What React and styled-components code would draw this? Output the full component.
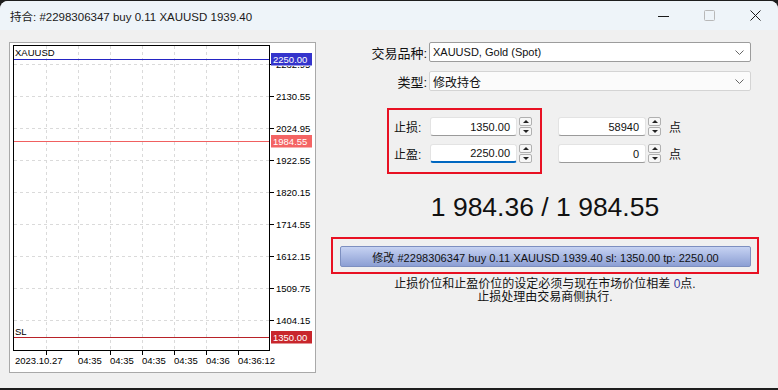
import React from 'react';
import styled, { createGlobalStyle } from 'styled-components';

const FONT = `"Liberation Sans", "Noto Sans CJK SC", sans-serif`;

const GlobalStyle = createGlobalStyle`
  html, body {
    margin: 0;
    background: #1e1e1e;
  }
  #root {
    width: 778px;
    height: 390px;
  }
`;

const Window = styled.div`
  width: 778px;
  height: 387px;
  margin-top: 1px;
  background: #f0f0f0;
  border-radius: 8px 8px 0 0;
  overflow: hidden;
  display: flex;
  flex-direction: column;
  font-family: ${FONT};
  color: #111;
`;

const TitleBar = styled.div`
  height: 29px;
  flex: none;
  display: flex;
  align-items: center;
  background: #eef4f9;
  padding-left: 10px;
`;

const Title = styled.span`
  flex: 1;
  font-size: 11.5px;
  color: #1a1a1a;
`;

const WinButton = styled.div`
  width: 46px;
  height: 29px;
  display: flex;
  align-items: center;
  justify-content: center;
`;

const Body = styled.div`
  flex: 1;
  display: flex;
  align-items: flex-start;
  padding: 12px 0 0 9px;
`;

const ChartPanel = styled.div`
  width: 307px;
  height: 331px;
  box-sizing: border-box;
  border: 1px solid #a9a9a9;
  background: #fff;
  flex: none;
  svg {
    display: block;
  }
`;

const RightColumn = styled.div`
  margin-left: 14px;
  width: 430px;
  display: flex;
  flex-direction: column;
`;

const FieldRow = styled.div`
  display: grid;
  grid-template-columns: 97px 322px;
  column-gap: 2px;
  align-items: center;
  margin-top: ${(p) => p.$gap || 0}px;
`;

const FieldLabel = styled.span`
  text-align: right;
  font-size: 13px;
`;

const Select = styled.div`
  height: 20px;
  box-sizing: border-box;
  border: 1px solid ${(p) => (p.$strong ? '#9c9c9c' : '#d4d4d4')};
  background: ${(p) => (p.$strong ? '#fff' : '#fbfbfb')};
  border-radius: 2px;
  display: flex;
  align-items: center;
  justify-content: space-between;
  padding: 0 6px 0 3px;
  font-size: ${(p) => (p.$cjk ? 12 : 11)}px;
`;

const StopsRow = styled.div`
  display: flex;
  align-items: flex-start;
  margin-top: 17px;
  padding-left: 57px;
`;

const HighlightBox = styled.div`
  box-sizing: border-box;
  border: 2px solid #e81123;
  display: flex;
  flex-direction: column;
  gap: 8px;
  width: 155px;
  padding: 7px 8px 9px 5px;
`;

const PointsColumn = styled.div`
  display: flex;
  flex-direction: column;
  gap: 8px;
  margin-left: 16px;
  padding-top: 9px;
`;

const StopLine = styled.div`
  display: flex;
  align-items: center;
  height: 19px;
`;

const StopLabel = styled.span`
  width: 36px;
  font-size: 12px;
`;

const NumberInput = styled.div`
  width: ${(p) => p.$width}px;
  height: 19px;
  box-sizing: border-box;
  background: #fff;
  border: 1px solid #e3e3e3;
  border-bottom: ${(p) => (p.$focused ? '2px solid #0067c0' : '1px solid #9a9a9a')};
  border-radius: 3px;
  display: flex;
  align-items: center;
  justify-content: flex-end;
  padding-right: 6px;
  font-size: 11px;
`;

const Spinner = styled.div`
  margin-left: 2px;
  width: 13px;
  height: 19px;
  display: flex;
  flex-direction: column;
  gap: 1px;
`;

const SpinHalf = styled.div`
  flex: 1;
  box-sizing: border-box;
  border: 1px solid #b0b0b0;
  border-radius: 2px;
  background: #f7f7f7;
  display: flex;
  align-items: center;
  justify-content: center;
  &::after {
    content: '';
    width: 0;
    height: 0;
    border-left: 3px solid transparent;
    border-right: 3px solid transparent;
    ${(p) => (p.$up ? 'border-bottom: 3px solid #222;' : 'border-top: 3px solid #222;')}
  }
`;

const Unit = styled.span`
  margin-left: 8px;
  font-size: 12px;
`;

const Price = styled.div`
  margin-top: 17px;
  text-align: center;
  font-size: 26.5px;
  line-height: 32px;
  color: #111;
`;

const ButtonBox = styled.div`
  margin-top: 14px;
  margin-left: 1px;
  width: 428px;
  height: 37px;
  box-sizing: border-box;
  border: 2px solid #e81123;
  padding: 7px 6px 5px 7px;
`;

const ModifyButton = styled.div`
  height: 21px;
  box-sizing: border-box;
  border: 1px solid #7d8fc0;
  border-radius: 2px;
  background: linear-gradient(#c6d2f2, #8c9fd4);
  display: flex;
  align-items: center;
  justify-content: center;
  font-size: 11px;
  letter-spacing: 0.05px;
  color: #111;
`;

const Notes = styled.div`
  margin-top: 4px;
  text-align: center;
  font-size: 12px;
  line-height: 13px;
`;

const Zero = styled.span`
  color: #3a3aa0;
`;

const gridX = [36, 68, 100, 132, 164, 196, 228];
const prices = ['2232.95', '2130.55', '2024.95', '1922.55', '1820.15', '1714.55', '1612.15', '1509.75', '1404.15'];
const times = [
  ['2023.10.27', 5],
  ['04:35', 68],
  ['04:35', 100],
  ['04:35', 132],
  ['04:35', 164],
  ['04:36', 196],
  ['04:36:12', 228],
];
const levels = [
  { y: 16.5, line: '#2424c4', box: '#3434cc', label: '2250.00' },
  { y: 98.5, line: '#f06060', box: '#f46464', label: '1984.55' },
  { y: 294.5, line: '#b82228', box: '#c8262c', label: '1350.00' },
];

function Chart() {
  const font = { fontFamily: '"Liberation Sans", sans-serif', fontSize: 9.5 };
  return (
    <svg width="305" height="329" viewBox="0 0 305 329">
      <defs>
        <clipPath id="belowTp">
          <rect x="260" y="23" width="45" height="10" />
        </clipPath>
      </defs>
      {gridX.map((x) => (
        <line key={x} x1={x + 0.5} y1="3" x2={x + 0.5} y2="307" stroke="#dadada" strokeDasharray="3 3" />
      ))}
      {prices.map((p, i) => (
        <line key={p} x1="4" y1={21.5 + 32 * i} x2="259" y2={21.5 + 32 * i} stroke="#dadada" strokeDasharray="3 3" />
      ))}
      {levels.map((l) => (
        <line key={l.label} x1="4" y1={l.y} x2="259" y2={l.y} stroke={l.line} />
      ))}
      <rect x="3.5" y="2.5" width="256" height="305" fill="none" stroke="#000" />
      {prices.map((p, i) => (
        <g key={p}>
          <line x1="259.5" y1={21.5 + 32 * i} x2="264" y2={21.5 + 32 * i} stroke="#000" />
          <text
            x="266"
            y={25 + 32 * i}
            {...font}
            fill="#000"
            clipPath={i === 0 ? 'url(#belowTp)' : undefined}
          >
            {p}
          </text>
        </g>
      ))}
      {levels.map((l) => (
        <g key={l.label}>
          <rect x="261" y={l.y - 6.5} width="41" height="12.5" fill={l.box} />
          <text x="263" y={l.y + 3.5} {...font} fill="#fff">{l.label}</text>
        </g>
      ))}
      {gridX.map((x) => (
        <line key={x} x1={x + 0.5} y1="308" x2={x + 0.5} y2="312" stroke="#000" />
      ))}
      {times.map(([t, x], i) => (
        <text key={i} x={x} y="321" {...font} fill="#000">{t}</text>
      ))}
      <text x="5" y="13" {...font} fill="#000">XAUUSD</text>
      <text x="5" y="292" {...font} fill="#000">SL</text>
    </svg>
  );
}

function Chevron() {
  return (
    <svg width="9" height="5" viewBox="0 0 9 5">
      <path d="M0.5 0.5 L4.5 4.5 L8.5 0.5" fill="none" stroke="#666" />
    </svg>
  );
}

function Spin() {
  return (
    <Spinner>
      <SpinHalf $up />
      <SpinHalf />
    </Spinner>
  );
}

export default function App() {
  return (
    <>
      <GlobalStyle />
      <Window>
        <TitleBar>
          <Title>持合: #2298306347 buy 0.11 XAUUSD 1939.40</Title>
          <WinButton>
            <svg width="11" height="11" viewBox="0 0 11 11">
              <line x1="0" y1="6.5" x2="11" y2="6.5" stroke="#1a1a1a" />
            </svg>
          </WinButton>
          <WinButton>
            <svg width="11" height="11" viewBox="0 0 11 11">
              <rect x="0.5" y="0.5" width="10" height="10" rx="1" fill="none" stroke="#b8b8b8" />
            </svg>
          </WinButton>
          <WinButton>
            <svg width="11" height="11" viewBox="0 0 11 11">
              <path d="M0.5 0.5 L10.5 10.5 M10.5 0.5 L0.5 10.5" stroke="#1a1a1a" />
            </svg>
          </WinButton>
        </TitleBar>
        <Body>
          <ChartPanel>
            <Chart />
          </ChartPanel>
          <RightColumn>
            <FieldRow>
              <FieldLabel>交易品种:</FieldLabel>
              <Select $strong>
                <span>XAUUSD, Gold (Spot)</span>
                <Chevron />
              </Select>
            </FieldRow>
            <FieldRow $gap={9}>
              <FieldLabel>类型:</FieldLabel>
              <Select $cjk>
                <span>修改持仓</span>
                <Chevron />
              </Select>
            </FieldRow>
            <StopsRow>
              <HighlightBox>
                <StopLine>
                  <StopLabel>止损:</StopLabel>
                  <NumberInput $width={87}>1350.00</NumberInput>
                  <Spin />
                </StopLine>
                <StopLine>
                  <StopLabel>止盈:</StopLabel>
                  <NumberInput $width={87} $focused>2250.00</NumberInput>
                  <Spin />
                </StopLine>
              </HighlightBox>
              <PointsColumn>
                <StopLine>
                  <NumberInput $width={88}>58940</NumberInput>
                  <Spin />
                  <Unit>点</Unit>
                </StopLine>
                <StopLine>
                  <NumberInput $width={88}>0</NumberInput>
                  <Spin />
                  <Unit>点</Unit>
                </StopLine>
              </PointsColumn>
            </StopsRow>
            <Price>1 984.36 / 1 984.55</Price>
            <ButtonBox>
              <ModifyButton>修改 #2298306347 buy 0.11 XAUUSD 1939.40 sl: 1350.00 tp: 2250.00</ModifyButton>
            </ButtonBox>
            <Notes>
              止损价位和止盈价位的设定必须与现在市场价位相差 <Zero>0</Zero>点.
              <br />
              止损处理由交易商侧执行.
            </Notes>
          </RightColumn>
        </Body>
      </Window>
    </>
  );
}
